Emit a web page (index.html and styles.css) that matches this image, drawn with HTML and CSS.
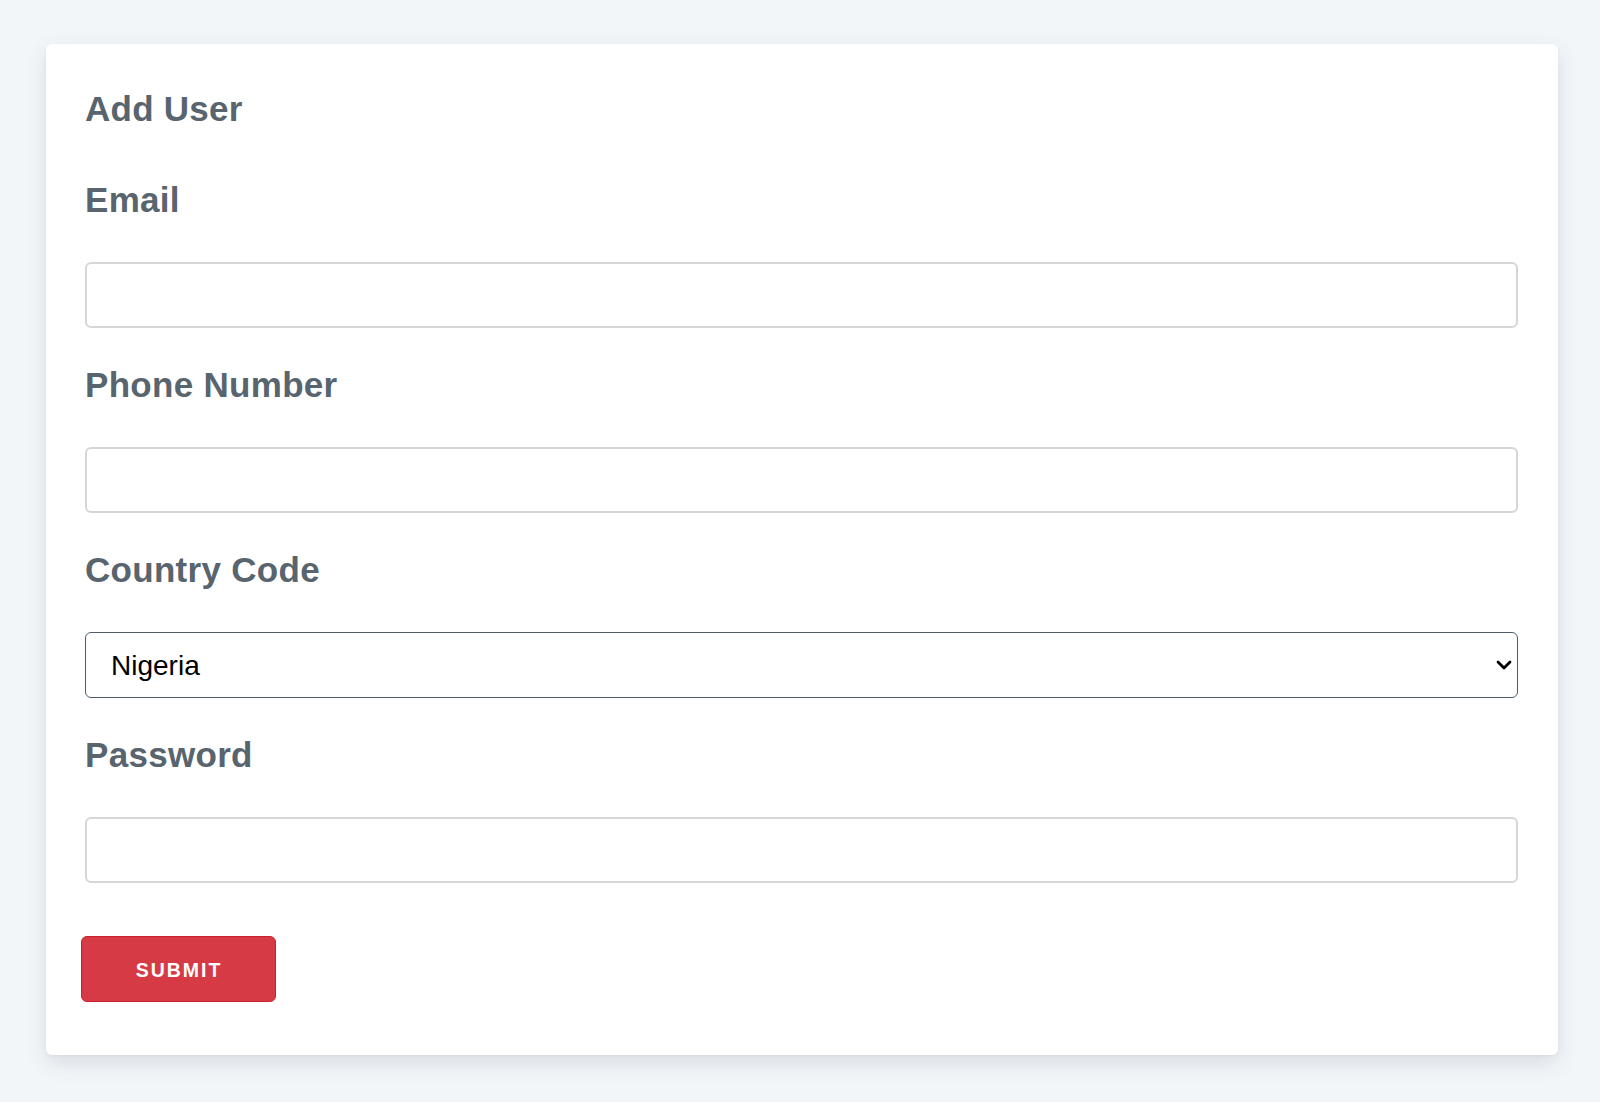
FILE: index.html
```html
<!DOCTYPE html>
<html lang="en">
<head>
<meta charset="utf-8">
<title>Add User</title>
<link rel="stylesheet" href="styles.css">
</head>
<body>
<main class="page">
  <form class="card">
    <h2 class="title">Add User</h2>
    <div class="field">
      <label class="label" for="email">Email</label>
      <input class="input" id="email" type="email">
    </div>
    <div class="field">
      <label class="label" for="phone">Phone Number</label>
      <input class="input" id="phone" type="tel">
    </div>
    <div class="field">
      <label class="label" for="country">Country Code</label>
      <div class="select-wrap">
        <select class="select" id="country">
          <option>Nigeria</option>
        </select>
        <svg class="chevron" width="16" height="10" viewBox="0 0 16 10" aria-hidden="true">
          <path d="M2 2 L8 8 L14 2" fill="none" stroke="#000" stroke-width="2.8" stroke-linecap="round" stroke-linejoin="round"/>
        </svg>
      </div>
    </div>
    <div class="field">
      <label class="label" for="password">Password</label>
      <input class="input" id="password" type="password">
    </div>
    <button class="submit" type="button">SUBMIT</button>
  </form>
</main>
</body>
</html>
```

FILE: styles.css
```css
* { box-sizing: border-box; }

html, body {
  margin: 0;
  padding: 0;
  background: #f3f6f9;
  font-family: "Liberation Sans", Arial, sans-serif;
}

.page {
  padding: 44px 42px 48px 46px;
}

.card {
  background: #ffffff;
  border-radius: 6px;
  box-shadow: 0 8px 22px rgba(40, 55, 75, 0.13), 0 1px 3px rgba(40, 55, 75, 0.06);
  padding: 45.5px 40px 53px 39px;
  display: flex;
  flex-direction: column;
  align-items: stretch;
}

.title {
  margin: 0 0 53px 0;
  font-size: 35px;
  line-height: 38px;
  font-weight: 700;
  letter-spacing: 0.25px;
  color: #58646e;
}

.field {
  display: flex;
  flex-direction: column;
  margin-bottom: 37.5px;
}

.field:last-of-type {
  margin-bottom: 53px;
}

.label {
  font-size: 35px;
  line-height: 38px;
  font-weight: 700;
  letter-spacing: 0.3px;
  color: #58646e;
  margin-bottom: 43.5px;
}

.input {
  height: 66px;
  border: 2px solid #d6d6d6;
  border-radius: 6px;
  background: #fff;
  font-family: inherit;
  font-size: 28px;
  padding: 0 24px;
  outline: none;
}

.select-wrap {
  position: relative;
}

.select {
  width: 100%;
  height: 66px;
  appearance: none;
  -webkit-appearance: none;
  border: 1.5px solid #4e5d6a;
  border-radius: 6px;
  background: #fff;
  font-family: inherit;
  font-size: 28px;
  color: #000;
  padding: 0 40px 0 25px;
  outline: none;
}

.chevron {
  position: absolute;
  right: 6px;
  top: 28px;
  pointer-events: none;
}

.submit {
  align-self: flex-start;
  margin-left: -4px;
  width: 195px;
  height: 66px;
  background: #d63a44;
  border: 1px solid #c8202c;
  border-radius: 6px;
  color: #ffffff;
  font-family: inherit;
  font-size: 19.5px;
  font-weight: 700;
  letter-spacing: 2px;
  padding: 3px 0 0 1px;
  cursor: pointer;
}
```
